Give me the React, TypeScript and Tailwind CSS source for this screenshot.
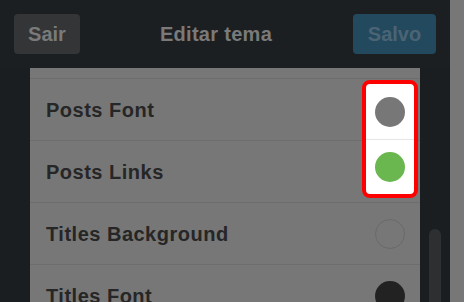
const rows = [
  { label: "Posts Font", color: "bg-[#777777]" },
  { label: "Posts Links", color: "bg-[#6ab74f]" },
  { label: "Titles Background", color: "border border-[#6a6a6a]" },
  { label: "Titles Font", color: "bg-[#222222]" },
];

export default function App() {
  return (
    <div className="flex h-[302px] w-[464px] overflow-hidden bg-[#1b1e21] font-['Liberation_Sans',Arial,sans-serif]">
      <div className="flex flex-1 flex-col overflow-hidden">
        {/* Header */}
        <div className="flex h-[68px] shrink-0 items-center justify-between bg-[#1c1f22] px-[14px]">
          <button className="h-10 w-[66px] rounded-[4px] bg-[#333537] text-[20px] font-bold text-[#7a7a7a]">
            Sair
          </button>
          <h1 className="text-[20px] font-bold tracking-[0.3px] text-[#7a7a7a]">Editar tema</h1>
          <button className="ml-px h-10 w-[83px] rounded-[4px] bg-[#23495f] text-[20px] font-bold text-[#4b6474]">
            Salvo
          </button>
        </div>

        {/* Body */}
        <div className="flex min-h-0 flex-1 pl-[30px]">
          <div className="relative w-[390px] bg-[#777777]">
            <div className="h-[11px] border-b border-[#6d6d6d]" />
            {rows.map((r, i) => (
              <div
                key={r.label}
                className="flex h-[62px] items-center justify-between border-b border-[#6d6d6d] pl-4 pr-[15px]"
              >
                <span className="text-[20px] font-bold tracking-[0.5px] text-[#262626]">{r.label}</span>
                {i > 1 && <span className={`h-[30px] w-[30px] rounded-full ${r.color}`} />}
              </div>
            ))}

            {/* highlight */}
            <div className="absolute left-[332px] top-[12px] flex h-[118px] w-[56px] flex-col rounded-[8px] border-4 border-[#ff0000] bg-white">
              <div className="flex h-[56px] items-center justify-center border-b border-[#e6e6e6]">
                <span className="h-[30px] w-[30px] rounded-full bg-[#777777]" />
              </div>
              <div className="flex flex-1 items-center justify-center">
                <span className="h-[30px] w-[30px] rounded-full bg-[#6ab74f]" />
              </div>
            </div>
          </div>

          {/* scroll track */}
          <div className="flex w-[30px] justify-center pt-[161px]">
            <div className="h-[120px] w-3 rounded-full bg-[#2d2f31]" />
          </div>
        </div>
      </div>
      <div className="w-[14px] bg-[#777777]" />
    </div>
  );
}
